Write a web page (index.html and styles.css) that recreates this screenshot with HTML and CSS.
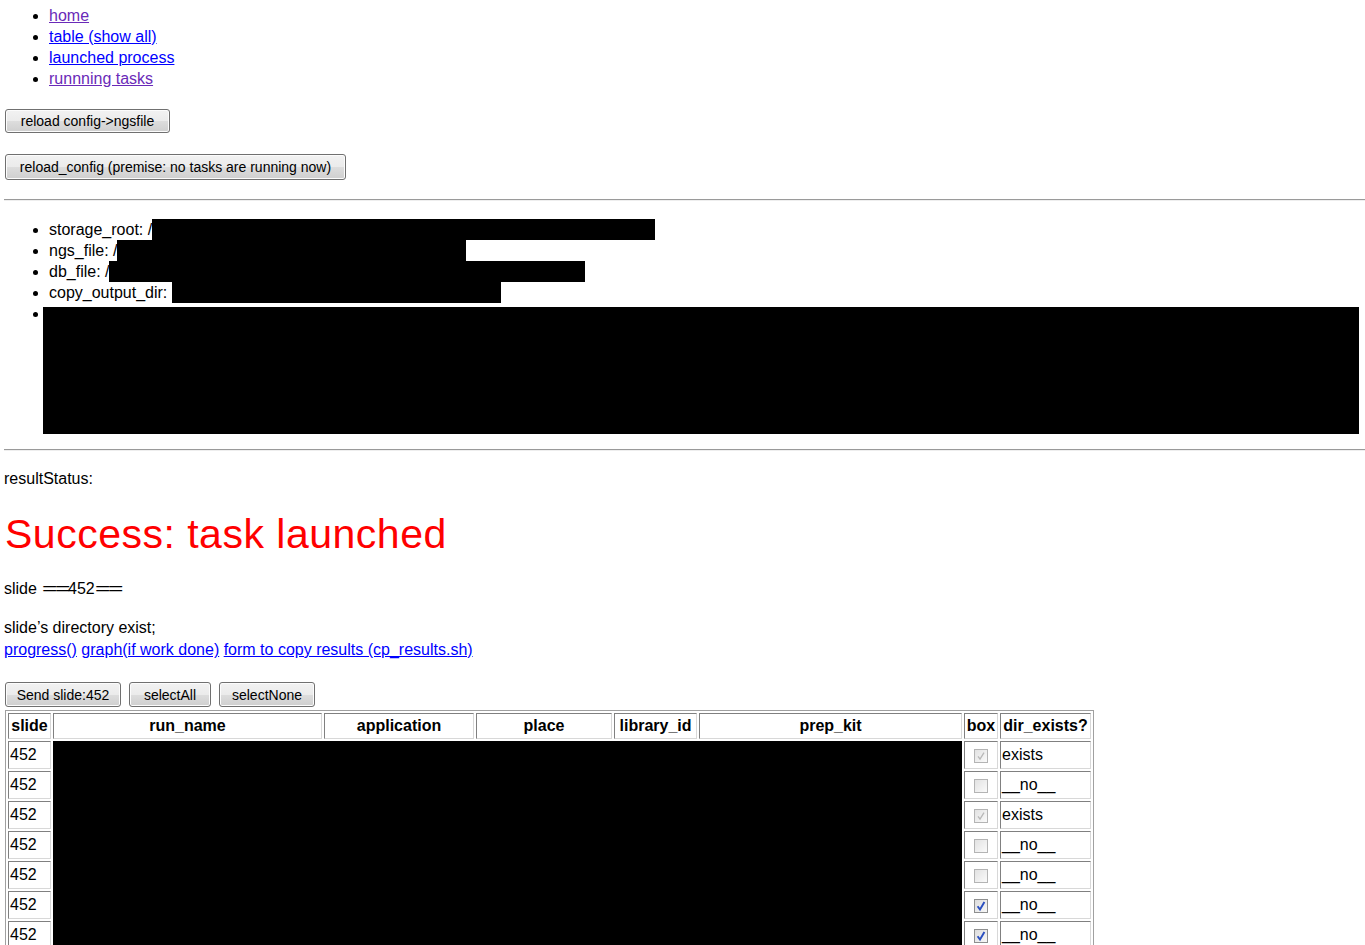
FILE: index.html
```html
<!DOCTYPE html>
<html>
<head>
<meta charset="utf-8">
<title>ngs</title>
<link rel="stylesheet" href="styles.css">
</head>
<body>
<ul class="nav">
  <li><a class="visited" href="#">home</a></li>
  <li><a href="#">table (show all)</a></li>
  <li><a href="#">launched process</a></li>
  <li><a class="visited" href="#">runnning tasks</a></li>
</ul>
<form class="frm"><button type="button" class="btn b1">reload config-&gt;ngsfile</button></form>
<form class="frm"><button type="button" class="btn b2">reload_config (premise: no tasks are running now)</button></form>
<hr>
<ul class="cfg">
  <li>storage_root: /<span class="red r1"></span></li>
  <li>ngs_file: /<span class="red r2"></span></li>
  <li>db_file: /<span class="red r3"></span></li>
  <li>copy_output_dir: <span class="red r4"></span></li>
  <li class="bigli"><span class="red r5"></span></li>
</ul>
<hr>
<p class="status">resultStatus:</p>
<h1 class="ok">Success: task launched</h1>
<p class="slide">slide <span class="eq">==</span>452<span class="eq">==</span></p>
<p class="dir">slide’s directory exist;<br><span class="links"><a href="#">progress()</a> <a href="#">graph(if work done)</a> <a href="#">form to copy results (cp_results.sh)</a></span></p>
<div class="btnrow">
  <button type="button" class="btn b3">Send slide:452</button>
  <button type="button" class="btn b4">selectAll</button>
  <button type="button" class="btn b5">selectNone</button>
</div>
<table class="tbl">
  <thead>
    <tr>
      <th class="c-slide">slide</th>
      <th class="c-run">run_name</th>
      <th class="c-app">application</th>
      <th class="c-place">place</th>
      <th class="c-lib">library_id</th>
      <th class="c-kit">prep_kit</th>
      <th class="c-box">box</th>
      <th class="c-dir">dir_exists?</th>
    </tr>
  </thead>
  <tbody>
    <tr>
      <td>452</td>
      <td class="black" colspan="5" rowspan="7"></td>
      <td class="cb"><span class="chk dis on"><svg viewBox="0 0 14 14" width="14" height="14"><path d="M4 7.4 L6 10 L10 3.6" fill="none" stroke="#b8b8b8" stroke-width="1.3"/></svg></span></td>
      <td>exists</td>
    </tr>
    <tr>
      <td>452</td>
      <td class="cb"><span class="chk dis"></span></td>
      <td>__no__</td>
    </tr>
    <tr>
      <td>452</td>
      <td class="cb"><span class="chk dis on"><svg viewBox="0 0 14 14" width="14" height="14"><path d="M4 7.4 L6 10 L10 3.6" fill="none" stroke="#b8b8b8" stroke-width="1.3"/></svg></span></td>
      <td>exists</td>
    </tr>
    <tr>
      <td>452</td>
      <td class="cb"><span class="chk dis"></span></td>
      <td>__no__</td>
    </tr>
    <tr>
      <td>452</td>
      <td class="cb"><span class="chk dis"></span></td>
      <td>__no__</td>
    </tr>
    <tr>
      <td>452</td>
      <td class="cb"><span class="chk on"><svg viewBox="0 0 14 14" width="14" height="14"><path d="M3.6 7.2 L6 10.6 L10.4 3" fill="none" stroke="#2a4fc0" stroke-width="1.9"/></svg></span></td>
      <td>__no__</td>
    </tr>
    <tr>
      <td>452</td>
      <td class="cb"><span class="chk on"><svg viewBox="0 0 14 14" width="14" height="14"><path d="M3.6 7.2 L6 10.6 L10.4 3" fill="none" stroke="#2a4fc0" stroke-width="1.9"/></svg></span></td>
      <td>__no__</td>
    </tr>
  </tbody>
</table>
</body>
</html>
```
FILE: styles.css
```css
html, body {
  background: #fff;
}
body {
  margin: 5px 0 0 4px;
  font-family: "Liberation Sans", Arial, sans-serif;
  font-size: 16px;
  color: #000;
}
a {
  color: #0000ff;
  text-decoration: underline;
}
a.visited {
  color: #6a2ab8;
}
ul {
  margin: 0;
  padding-left: 45px;
  list-style: disc;
}
li {
  line-height: 21px;
}
.nav {
  margin: 0;
}
.frm {
  margin: 20px 0 0 1px;
  height: 24px;
}
.frm + .frm {
  margin-top: 21px;
  height: 26px;
}
.btn {
  font-family: "Liberation Sans", Arial, sans-serif;
  font-size: 14px;
  color: #000;
  height: 24px;
  padding: 0 10px;
  border: 1px solid #707070;
  border-radius: 3px;
  background: linear-gradient(#f2f2f2 0%, #ebebeb 50%, #dddddd 51%, #cfcfcf 100%);
  box-shadow: inset 0 0 0 1px #fcfcfc;
  vertical-align: top;
}
.b1 { width: 165px; }
.b2 { width: 341px; height: 26px; }
hr {
  margin: 19px 0 0 0;
  border: 0;
  border-top: 1px solid #9a9a9a;
  border-bottom: 1px solid #eeeeee;
  height: 0;
}
.cfg {
  margin-top: 18px;
}
.red {
  display: inline-block;
  background: #000;
  vertical-align: top;
}
.r1 { width: 503px; height: 21px; }
.r2 { width: 349px; height: 21px; }
.r3 { width: 476px; height: 21px; }
.r4 { width: 329px; height: 21px; }
.r5 { width: 1316px; height: 127px; margin: 4px 0 0 -6px; }
.cfg li { height: 21px; }
.cfg li.bigli { height: 131px; }
.cfg + hr {
  margin-top: 15px;
}
.status {
  margin: 17px 0 0 0;
  line-height: 21px;
}
.ok {
  margin: 21px 0 0 1px;
  color: #ff0000;
  font-weight: normal;
  font-size: 41px;
  line-height: 48px;
  letter-spacing: 0.5px;
}
.slide {
  margin: 20px 0 0 0;
  line-height: 21px;
}
.eq {
  display: inline-block;
  letter-spacing: -1.5px;
  transform: scaleX(1.65);
  transform-origin: left center;
  margin: 0 10px 0 0;
}
.eq:first-child {
  margin-left: 1px;
}
.dir {
  margin: 18px 0 0 0;
  line-height: 21px;
}
.links {
  display: inline-block;
  margin-top: 1px;
}
.btnrow {
  margin: 22px 0 0 1px;
  display: flex;
  gap: 8px;
}
.btnrow .btn { height: 25px; }
.b3 { width: 116px; }
.b4 { width: 82px; }
.b5 { width: 96px; }
.tbl {
  margin: 3px 0 0 1px;
  border: 1px solid #a0a0a0;
  border-spacing: 2px;
  border-collapse: separate;
}
.tbl th, .tbl td {
  border: 1px solid;
  border-color: #808080 #d8d8d8 #d8d8d8 #808080;
  padding: 0 1px;
  font-size: 16px;
}
.tbl th {
  height: 24px;
  font-weight: bold;
  text-align: center;
}
.tbl td {
  height: 26px;
  text-align: left;
}
.c-slide { width: 39px; }
.c-run { width: 265px; }
.c-app { width: 146px; }
.c-place { width: 132px; }
.c-lib { width: 79px; }
.c-kit { width: 259px; }
.c-box { width: 30px; }
.c-dir { width: 87px; }
.tbl td.black {
  background: #000;
  border-color: #000;
}
.tbl td.cb {
  text-align: center;
  vertical-align: middle;
  padding: 0;
}
.chk {
  display: inline-block;
  width: 14px;
  height: 14px;
  box-sizing: border-box;
  border: 1px solid #8e8f8f;
  background: linear-gradient(135deg, #dcdcdc, #f8f8f8);
  vertical-align: middle;
  position: relative;
}
.chk.dis {
  border-color: #b4b4b4;
  background: linear-gradient(135deg, #e2e2e2, #fafafa);
}
.chk svg {
  position: absolute;
  left: -1px;
  top: -1px;
}
```
